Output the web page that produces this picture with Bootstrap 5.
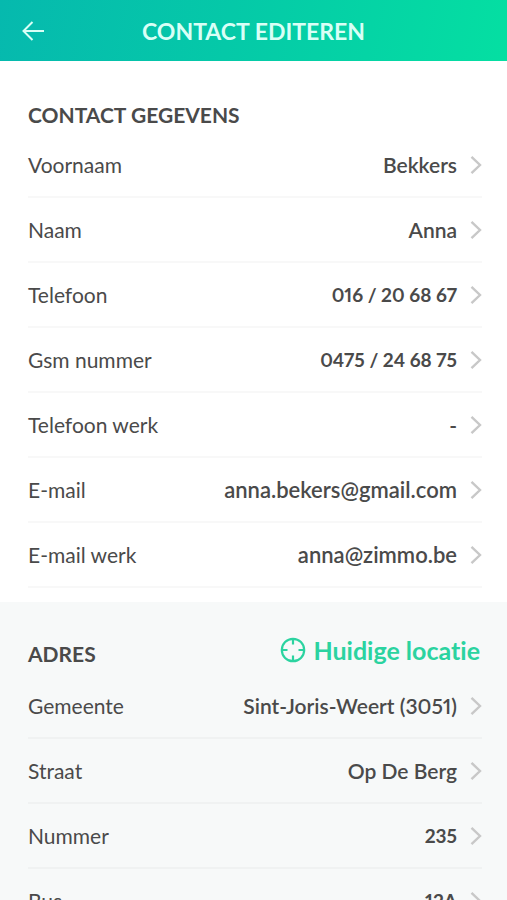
<!DOCTYPE html>
<html lang="nl">
<head>
<meta charset="utf-8">
<meta name="viewport" content="width=device-width, initial-scale=1">
<title>Contact editeren</title>
<link href="https://cdn.jsdelivr.net/npm/bootstrap@5.3.0/dist/css/bootstrap.min.css" rel="stylesheet">
<style>
  body { font-family: Lato, "Open Sans", sans-serif; font-size: 21px; line-height: 28px; color: #4a4a4a; background: #fff; font-variant-numeric: proportional-nums; font-variant-ligatures: none; }
  .topbar { display: grid; grid-template-columns: 24px 1fr 24px; min-height: 61px; padding: 0 22px; background: linear-gradient(100deg, #06b9ae 0%, #05c9a8 45%, #05dfa2 100%); color: #d9fff6; }
  .topbar h1 { font-size: 23px; line-height: 28px; font-weight: 700; }
  .panel { padding: 36px 25px 14px 28px; }
  .panel-alt { background: #f7f9f9; padding-top: 32px; }
  .panel-head { min-height: 36px; }
  .panel-alt .panel-head { min-height: 40px; }
  .panel h2 { font-size: 21px; line-height: 28px; font-weight: 700; }
  .locate { color: #2bd3a0; font-size: 25px; line-height: 28px; font-weight: 700; font-variant-ligatures: none; gap: 7px; margin: 0 2px 8px 0; }
  .field { min-height: 65px; color: inherit; border-bottom: 2px solid #f8f8f8; }
  .panel-alt .field { border-color: #f0f2f2; }
  .field-value { font-weight: 600; }
  .value-number { font-size: 19px; font-weight: 700; }
  .value-email { font-size: 22px; }
  .chevron { margin-left: 13px; color: #c8c8c8; }
</style>
</head>
<body>
<svg class="d-none" aria-hidden="true">
  <symbol id="chevron" viewBox="0 0 12 20"><path d="M1.500 1.800 10 10 1.500 18.200" fill="none" stroke="currentColor" stroke-width="2.400"/></symbol>
</svg>

<header class="topbar align-items-center">
  <button type="button" class="btn p-0 border-0 d-flex text-reset" aria-label="Terug">
    <svg width="22" height="20" viewBox="0 0 22 20" fill="none" stroke="currentColor" stroke-width="2"><path d="M22 10H1.500M10.500 1 1.500 10l9 9"/></svg>
  </button>
  <h1 class="m-0 text-center">CONTACT EDITEREN</h1>
</header>

<main>
  <section class="panel" aria-labelledby="gegevens">
    <div class="panel-head d-flex align-items-center">
      <h2 class="m-0" id="gegevens">CONTACT GEGEVENS</h2>
    </div>
    <a href="#voornaam" class="field d-flex align-items-center text-decoration-none"><span>Voornaam</span><span class="field-value ms-auto">Bekkers</span><svg class="chevron" width="12" height="20" aria-hidden="true"><use href="#chevron"/></svg></a>
    <a href="#naam" class="field d-flex align-items-center text-decoration-none"><span>Naam</span><span class="field-value ms-auto">Anna</span><svg class="chevron" width="12" height="20" aria-hidden="true"><use href="#chevron"/></svg></a>
    <a href="#telefoon" class="field d-flex align-items-center text-decoration-none"><span>Telefoon</span><span class="field-value value-number ms-auto">016 / 20 68 67</span><svg class="chevron" width="12" height="20" aria-hidden="true"><use href="#chevron"/></svg></a>
    <a href="#gsm" class="field d-flex align-items-center text-decoration-none"><span>Gsm nummer</span><span class="field-value value-number ms-auto">0475 / 24 68 75</span><svg class="chevron" width="12" height="20" aria-hidden="true"><use href="#chevron"/></svg></a>
    <a href="#telefoon-werk" class="field d-flex align-items-center text-decoration-none"><span>Telefoon werk</span><span class="field-value ms-auto">-</span><svg class="chevron" width="12" height="20" aria-hidden="true"><use href="#chevron"/></svg></a>
    <a href="#email" class="field d-flex align-items-center text-decoration-none"><span>E-mail</span><span class="field-value value-email ms-auto">anna.bekers@gmail.com</span><svg class="chevron" width="12" height="20" aria-hidden="true"><use href="#chevron"/></svg></a>
    <a href="#email-werk" class="field d-flex align-items-center text-decoration-none"><span>E-mail werk</span><span class="field-value value-email ms-auto">anna@zimmo.be</span><svg class="chevron" width="12" height="20" aria-hidden="true"><use href="#chevron"/></svg></a>
  </section>

  <section class="panel panel-alt" aria-labelledby="adres">
    <div class="panel-head d-flex align-items-center justify-content-between">
      <h2 class="m-0" id="adres">ADRES</h2>
      <button type="button" class="locate btn p-0 border-0 d-flex align-items-center">
        <svg width="26" height="26" viewBox="0 0 26 26" fill="none" stroke="currentColor" stroke-width="2.200" aria-hidden="true"><circle cx="13" cy="13" r="11.200"/><path d="M13 2v5.500M13 18.500V24M2 13h5.500M18.500 13H24"/></svg>
        Huidige locatie
      </button>
    </div>
    <a href="#gemeente" class="field d-flex align-items-center text-decoration-none"><span>Gemeente</span><span class="field-value ms-auto">Sint-Joris-Weert (3051)</span><svg class="chevron" width="12" height="20" aria-hidden="true"><use href="#chevron"/></svg></a>
    <a href="#straat" class="field d-flex align-items-center text-decoration-none"><span>Straat</span><span class="field-value ms-auto">Op De Berg</span><svg class="chevron" width="12" height="20" aria-hidden="true"><use href="#chevron"/></svg></a>
    <a href="#nummer" class="field d-flex align-items-center text-decoration-none"><span>Nummer</span><span class="field-value value-number ms-auto">235</span><svg class="chevron" width="12" height="20" aria-hidden="true"><use href="#chevron"/></svg></a>
    <a href="#bus" class="field d-flex align-items-center text-decoration-none"><span>Bus</span><span class="field-value value-number ms-auto">12A</span><svg class="chevron" width="12" height="20" aria-hidden="true"><use href="#chevron"/></svg></a>
  </section>
</main>
<script src="https://cdn.jsdelivr.net/npm/bootstrap@5.3.0/dist/js/bootstrap.bundle.min.js"></script>
</body>
</html>
